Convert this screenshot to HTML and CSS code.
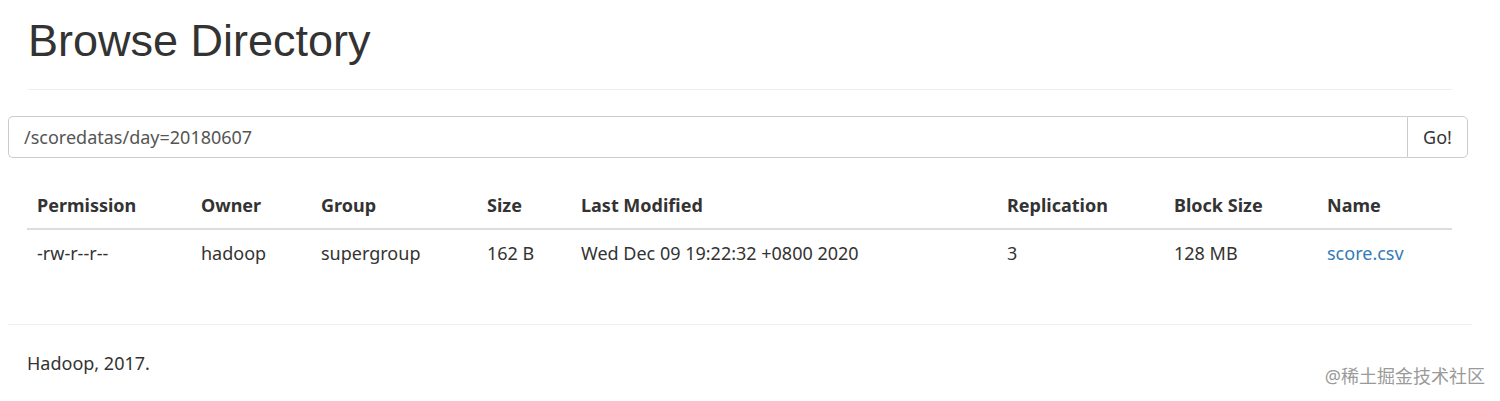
FILE: index.html
```html
<!DOCTYPE html>
<html>
<head>
<meta charset="utf-8">
<title>Browse Directory</title>
<link rel="stylesheet" href="styles.css">
</head>
<body>
<div class="page-header">
  <h1 class="title">Browse Directory</h1>
</div>
<div class="input-group">
  <input class="path-input" type="text" value="/scoredatas/day=20180607">
  <button class="go-btn">Go!</button>
</div>
<table class="listing">
  <colgroup>
    <col class="c1"><col class="c2"><col class="c3"><col class="c4"><col class="c5"><col class="c6"><col class="c7"><col class="c8">
  </colgroup>
  <thead>
    <tr><th>Permission</th><th>Owner</th><th>Group</th><th>Size</th><th>Last Modified</th><th>Replication</th><th>Block Size</th><th>Name</th></tr>
  </thead>
  <tbody>
    <tr><td>-rw-r--r--</td><td>hadoop</td><td>supergroup</td><td>162 B</td><td>Wed Dec 09 19:22:32 +0800 2020</td><td>3</td><td>128 MB</td><td><a class="file-link" href="#">score.csv</a></td></tr>
  </tbody>
</table>
<div class="footer">
  <p class="footer-text">Hadoop, 2017.</p>
  <span class="watermark">@稀土掘金技术社区</span>
</div>
</body>
</html>
```

FILE: styles.css
```css
html, body {
  margin: 0;
  padding: 0;
  background: #fff;
}
body {
  font-family: "Noto Sans", "Noto Sans CJK SC", sans-serif;
  font-size: 18px;
  color: #333;
  width: 1500px;
  height: 401px;
  overflow: hidden;
  position: relative;
}
.page-header {
  margin: 0 48px 0 28px;
  padding: 16px 0 23px 0;
  border-bottom: 1px solid #eee;
}
.title {
  margin: 0;
  font-family: "Liberation Sans", Arial, sans-serif;
  font-weight: 400;
  font-size: 45px;
  line-height: 50px;
  color: #333;
}
.input-group {
  display: flex;
  margin: 26px 32px 0 8px;
  height: 42px;
}
.path-input {
  flex: 1;
  box-sizing: border-box;
  height: 42px;
  border: 1px solid #ccc;
  border-right: none;
  border-radius: 5px 0 0 5px;
  padding: 0 15px;
  font-family: inherit;
  font-size: 18px;
  color: #555;
  outline: none;
}
.go-btn {
  box-sizing: border-box;
  width: 61px;
  height: 42px;
  border: 1px solid #ccc;
  border-radius: 0 5px 5px 0;
  background: #fff;
  font-family: inherit;
  font-size: 18px;
  color: #333;
  padding: 0;
}
.listing {
  margin: 24px 48px 0 27px;
  width: 1425px;
  border-collapse: collapse;
  table-layout: fixed;
}
.c1 { width: 164px; }
.c2 { width: 120px; }
.c3 { width: 166px; }
.c4 { width: 94px; }
.c5 { width: 426px; }
.c6 { width: 167px; }
.c7 { width: 153px; }
.c8 { width: 135px; }
.listing th, .listing td {
  text-align: left;
  padding: 10px;
  line-height: 26px;
  white-space: nowrap;
}
.listing th {
  font-weight: 700;
  border-bottom: 2px solid #ddd;
}
.file-link {
  color: #337ab7;
  text-decoration: none;
}
.footer {
  margin: 48px 28px 0 8px;
  border-top: 1px solid #eee;
  padding: 0 0 0 19px;
}
.footer-text {
  margin: 0;
  padding-top: 25px;
  line-height: 26px;
}
.watermark {
  position: absolute;
  right: 15px;
  bottom: 13px;
  font-size: 18px;
  color: #9a9a9a;
}
```
